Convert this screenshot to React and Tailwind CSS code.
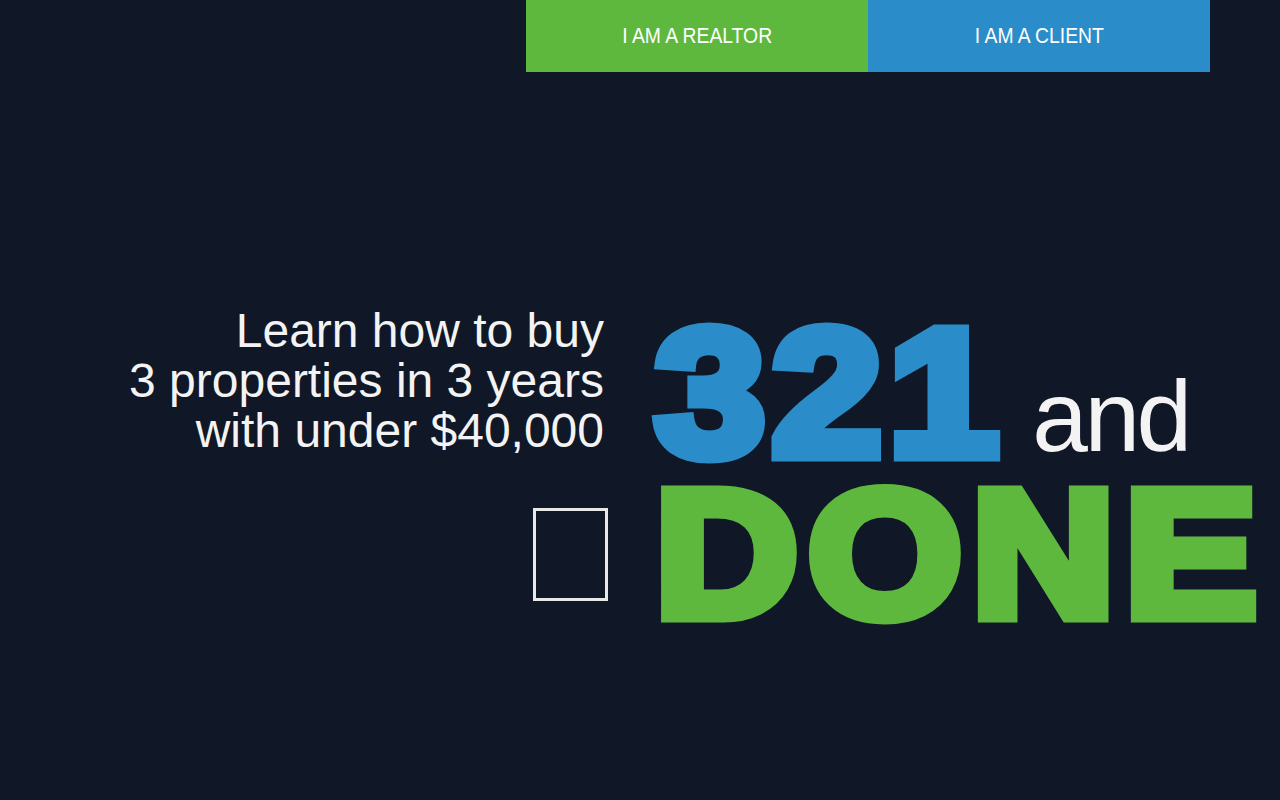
export default function App() {
  return (
    <div className="min-h-screen w-full bg-[#101727] font-['Liberation_Sans',Arial,sans-serif] overflow-hidden">
      {/* role switch */}
      <div className="flex justify-end pr-[70px]">
        <a className="flex h-[72px] w-[342px] items-center justify-center bg-[#5fb83e] pb-px text-white">
          <span className="inline-block scale-x-[0.88] whitespace-nowrap text-[22px]">I AM A REALTOR</span>
        </a>
        <a className="flex h-[72px] w-[342px] items-center justify-center bg-[#2a8dc9] pb-px text-white">
          <span className="inline-block scale-x-[0.88] whitespace-nowrap text-[22px]">I AM A CLIENT</span>
        </a>
      </div>

      {/* hero */}
      <div className="flex pt-[234px]">
        <div className="flex w-[604px] shrink-0 flex-col items-end">
          <h2 className="text-right text-[48px] leading-[50px] text-[#f3f3f3]">
            Learn how to buy
            <br />
            3 properties in 3 years
            <br />
            with under $40,000
          </h2>
          <div className="mt-[52px] mr-[-4px] h-[93px] w-[75px] border-[3px] border-[#e8e8e8]" />
        </div>
        <div className="ml-[51px] flex flex-col pt-[5px]">
          <div className="flex items-baseline whitespace-nowrap leading-[164px]">
            <span className="inline-block origin-left scale-x-[1.1] text-[180px] font-bold tracking-[6px] text-[#2a8dc9] [-webkit-text-stroke:13px_#2a8dc9]">
              321
            </span>
            <span className="relative -top-[4px] ml-[59px] text-[100px] leading-[100px] tracking-[-3.5px] text-[#f3f3f3]">and</span>
          </div>
          <div className="whitespace-nowrap leading-[157px]">
            <span className="inline-block origin-left scale-x-[1.1] text-[180px] font-bold tracking-[9px] text-[#5fb83e] [-webkit-text-stroke:13px_#5fb83e]">
              DONE
            </span>
          </div>
        </div>
      </div>
    </div>
  )
}
